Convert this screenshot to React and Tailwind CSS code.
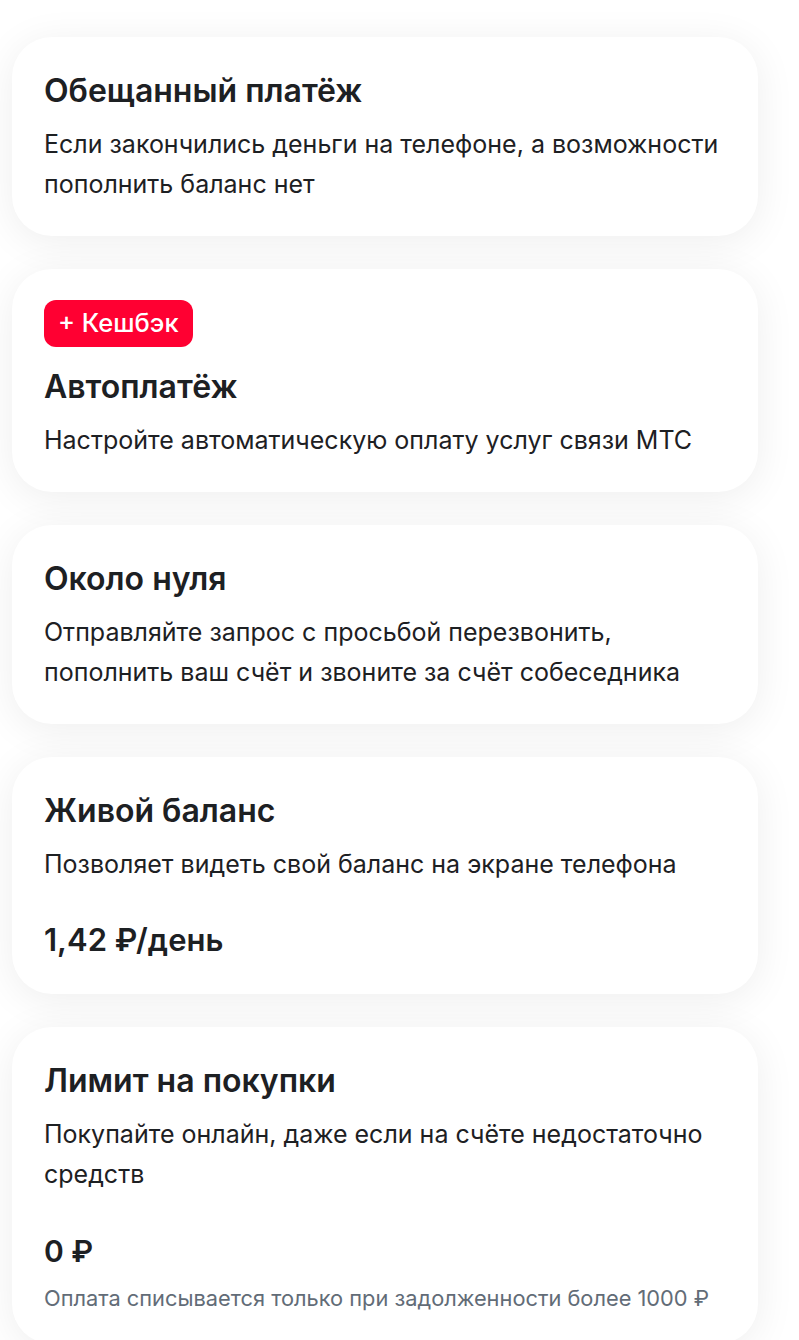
const cards = [
  {
    title: 'Обещанный платёж',
    text: 'Если закончились деньги на телефоне, а возможности пополнить баланс нет',
  },
  {
    badge: '+ Кешбэк',
    title: 'Автоплатёж',
    text: 'Настройте автоматическую оплату услуг связи МТС',
  },
  {
    title: 'Около нуля',
    text: 'Отправляйте запрос с просьбой перезвонить, пополнить ваш счёт и звоните за счёт собеседника',
  },
  {
    title: 'Живой баланс',
    text: 'Позволяет видеть свой баланс на экране телефона',
    price: '1,42 ₽/день',
  },
  {
    title: 'Лимит на покупки',
    text: 'Покупайте онлайн, даже если на счёте недостаточно средств',
    smallPrice: '0 ₽',
    note: 'Оплата списывается только при задолженности более 1000 ₽',
  },
];

function Card({ card }) {
  return (
    <div className="rounded-[40px] bg-white pl-8 pr-6 pt-8 pb-8 shadow-[0_6px_40px_rgba(0,0,0,0.07)]">
      {card.badge && (
        <div className="mb-[18px] -mt-[1px] inline-flex h-[47px] items-center rounded-[12px] bg-[#ff0032] px-[14px] text-[25.5px] font-medium text-white">
          {card.badge}
        </div>
      )}
      <h2 className="text-[32px] font-semibold leading-[44px] text-[#1d2023]">{card.title}</h2>
      <p className="mt-[11px] text-[25px] leading-[40px] text-[#1d2023]">{card.text}</p>
      {card.price && (
        <div className="mt-[34px] text-[31px] font-semibold leading-[44px] text-[#1d2023]">{card.price}</div>
      )}
      {card.smallPrice && (
        <div className="mt-[40px] text-[30px] font-semibold leading-[34px] text-[#1d2023]">{card.smallPrice}</div>
      )}
      {card.note && (
        <div className="mt-[16px] text-[21.8px] leading-[28px] text-[#626c77]">{card.note}</div>
      )}
    </div>
  );
}

export default function App() {
  return (
    <div className="min-h-screen bg-white pt-[37px] pb-10" style={{ fontFamily: 'Inter, "Noto Sans", sans-serif' }}>
      <div className="ml-[12px] flex w-[746px] flex-col gap-[33px]">
        {cards.map((card) => (
          <Card key={card.title} card={card} />
        ))}
      </div>
    </div>
  );
}
